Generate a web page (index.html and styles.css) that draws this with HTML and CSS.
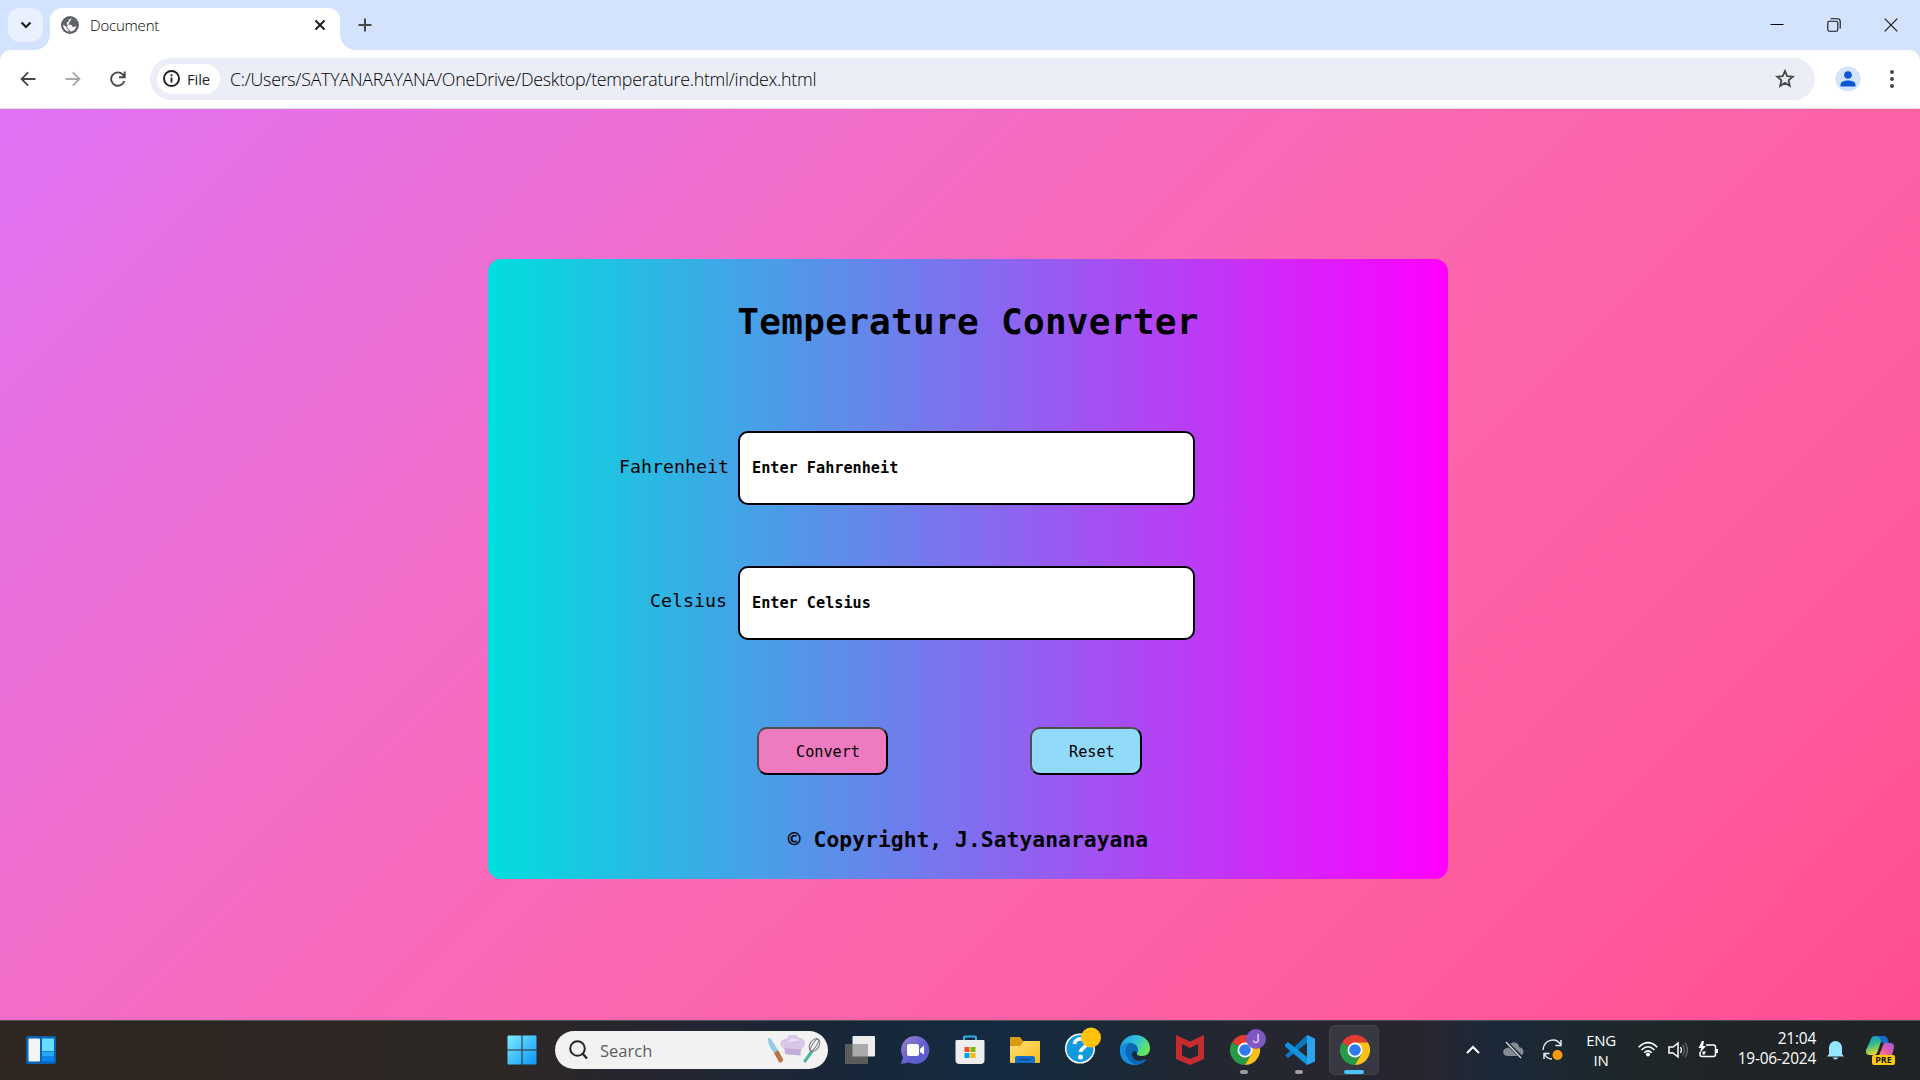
FILE: index.html
```html
<!DOCTYPE html>
<html lang="en">
<head>
<meta charset="utf-8">
<title>Document</title>
<link rel="stylesheet" href="styles.css">
</head>
<body>
<header class="tabstrip">
  <div class="tab-search"><svg width="12" height="8" viewBox="0 0 12 8"><path d="M1.5 1.5 6 6l4.500-4.500" fill="none" stroke="#1f1f1f" stroke-width="2.200"/></svg></div>
  <div class="tab">
    <svg class="globe" width="18" height="18" viewBox="0 0 18 18"><circle cx="9" cy="9" r="9" fill="#5f6368"/><path d="M10.800 2.200 7.500 4l.3 1.800-2 .8v2.200h4q1.700.2 1.700 2.300h1.500q1-1.300 2.300-.8a7 7 0 0 1-5.800 5.400q-.3-2.200-1.800-2.300-.8-2.200-2.700-2.600L2.200 8.400a7 7 0 0 0 5.300 7.400v-2.300q-2 0-2-2" fill="#fff"/></svg>
    <span class="tab-title">Document</span>
    <svg width="12" height="12" viewBox="0 0 12 12"><path d="m1.500 1.500 9 9m0-9-9 9" stroke="#1f1f1f" stroke-width="2"/></svg>
  </div>
  <svg class="new-tab" width="14" height="14" viewBox="0 0 14 14"><path d="M7 .5v13M.5 7h13" stroke="#474747" stroke-width="2"/></svg>
  <div class="window-controls">
    <svg width="14" height="14" viewBox="0 0 14 14"><path d="M.5 6.500h13" stroke="#000" stroke-width="1"/></svg>
    <svg width="14" height="14" viewBox="0 0 14 14"><rect x=".8" y="3.200" width="10" height="10" rx="1.500" fill="none" stroke="#111" stroke-width="1.100"/><path d="M3.500.8h7a2.700 2.700 0 0 1 2.700 2.700v7" fill="none" stroke="#111" stroke-width="1.100"/></svg>
    <svg width="14" height="14" viewBox="0 0 14 14"><path d="m.7.7 12.600 12.600m0-12.600L.7 13.300" stroke="#111" stroke-width="1.100"/></svg>
  </div>
</header>
<nav class="toolbar">
  <svg class="nav" width="16" height="16" viewBox="0 0 16 16"><path d="M15.500 8H2M8.200 1.300 1.500 8l6.700 6.700" fill="none" stroke="#474747" stroke-width="1.800"/></svg>
  <svg class="nav" width="16" height="16" viewBox="0 0 16 16"><path d="M.5 8H14M7.800 1.300 14.500 8l-6.700 6.700" fill="none" stroke="#a9a9a9" stroke-width="1.800"/></svg>
  <svg class="nav" width="16" height="16" viewBox="0 0 16 16"><path d="M14.300 10a6.700 6.700 0 1 1-1.600-6.600L14.500 5.500M14.700.5v5.700H9" fill="none" stroke="#474747" stroke-width="1.900"/></svg>
  <div class="omnibox">
    <div class="chip">
      <svg width="17" height="17" viewBox="0 0 17 17"><circle cx="8.500" cy="8.500" r="7.500" fill="none" stroke="#1f1f1f" stroke-width="1.900"/><path d="M8.500 7.500v5M8.500 4.300v1.900" stroke="#1f1f1f" stroke-width="1.800"/></svg>
      <span>File</span>
    </div>
    <span class="url">C:/Users/SATYANARAYANA/OneDrive/Desktop/temperature.html/index.html</span>
    <svg width="20" height="19" viewBox="0 0 20 19"><path d="m10 2 2.200 5.100 5.600.5-4.200 3.700 1.200 5.500L10 13.900l-4.800 2.900 1.200-5.500L2.200 7.600l5.600-.5z" fill="none" stroke="#474747" stroke-width="1.800"/></svg>
  </div>
  <svg class="avatar" width="26" height="26" viewBox="0 0 26 26"><circle cx="13" cy="13" r="12.500" fill="#d3e3fd"/><circle cx="13" cy="9" r="3.800" fill="#0b57d0"/><path d="M5.500 20.500v-2c0-5.500 15-5.500 15 0v2z" fill="#0b57d0"/></svg>
  <svg class="menu" width="4" height="18" viewBox="0 0 4 18"><g fill="#474747"><circle cx="2" cy="2" r="2"/><circle cx="2" cy="9" r="2"/><circle cx="2" cy="16" r="2"/></g></svg>
</nav>
<main class="page">
  <form class="converter">
    <h1>Temperature Converter</h1>
    <div class="field"><label for="fahrenheit">Fahrenheit</label><input id="fahrenheit" placeholder="Enter Fahrenheit"></div>
    <div class="field celsius"><label for="celsius">Celsius</label><input id="celsius" placeholder="Enter Celsius"></div>
    <div class="actions"><button class="convert" type="button">Convert</button><button class="reset" type="button">Reset</button></div>
    <h3>© Copyright, J.Satyanarayana</h3>
  </form>
</main>
<footer class="taskbar">
  <svg width="30" height="28" viewBox="0 0 30 28"><rect width="30" height="28" rx="2" fill="#0b62b5"/><rect x="2.500" y="2.500" width="11.500" height="23" rx="1" fill="#f3f3f5"/><path d="M16 2.500h12v12.500H16z" fill="#69dcff"/><path d="M16 15.500h12v5H16z" fill="#29a9fb"/><path d="M16 21h12v4.500H16z" fill="#0a84f0"/></svg>
  <div class="apps">
    <div class="app start"><svg width="30" height="30" viewBox="0 0 30 30"><defs><linearGradient id="win" x1="0" y1="0" x2="30" y2="30" gradientUnits="userSpaceOnUse"><stop stop-color="#7cf0ff"/><stop offset="1" stop-color="#0793fb"/></linearGradient></defs><path d="M.5 1.500q0-1 1-1h13v14H.5zM15.500.5h13q1 0 1 1v13h-14zM.5 15.500h14v14h-13q-1 0-1-1zM15.500 15.500h14v13q0 1-1 1h-13z" fill="url(#win)"/></svg></div>
    <div class="search">
      <svg width="19" height="20" viewBox="0 0 19 20"><circle cx="8.500" cy="8.500" r="7.300" fill="none" stroke="#252525" stroke-width="2"/><path d="m13.500 13.500 4.500 5" stroke="#252525" stroke-width="2.400"/></svg>
      <span>Search</span>
      <svg width="55" height="30" viewBox="0 0 55 30"><path d="M2 4c0-1.500 2-1.200 3 0l7 11-3.500 3C4 14 2 8 2 4z" fill="#91cce3"/><path d="m8 18 4-3 5 9c.5 3-2.500 4.500-4 3z" fill="#ba7441"/><path d="M18.500 14c-7-3-4-11 2-10 2-6 10-6 12-1 7-1 9 8 3 11l-1 6-15-1z" fill="#d9c7e9"/><path d="m18.500 13 16.500 1.500-1 6-15-1.500z" fill="#c4acd9"/><path d="M21 8c3-5 7-6 12-2-5 0-8 0-12 2z" fill="#eee2f6"/><path d="m45.500 17-6.500 9" stroke="#48b6a0" stroke-width="3" stroke-linecap="round"/><g fill="none" stroke="#77797d"><ellipse cx="48.500" cy="10" rx="4.500" ry="7" transform="rotate(32 48.500 10)"/><ellipse cx="48.500" cy="10" rx="2" ry="7" transform="rotate(32 48.500 10)"/></g></svg>
    </div>
    <div class="app first"><svg width="30" height="28" viewBox="0 0 30 28"><rect x="7.500" width="22.500" height="20.500" rx="1" fill="#ededed"/><rect y="8" width="23" height="20" rx="1" fill="#5b5c5e"/><path d="M7.500 8H23v12.500H7.500z" fill="#aaa"/></svg></div>
    <div class="app"><svg width="30" height="30" viewBox="0 0 30 30"><defs><linearGradient id="chat" x2="1" y2="1"><stop stop-color="#a080c4"/><stop offset=".55" stop-color="#6360cf"/><stop offset="1" stop-color="#5458cf"/></linearGradient></defs><path d="M15.500 1a14 14 0 1 1-6.500 26.500L1 29l2-7A14 14 0 0 1 15.500 1z" fill="url(#chat)"/><rect x="7" y="9" width="12" height="12" rx="2" fill="#fff"/><path d="m20 14 4-3.500v9L20 17z" fill="#fff"/></svg></div>
    <div class="app"><svg width="30" height="30" viewBox="0 0 30 30"><path d="M9 7V2.500q0-1 1-1h10q1 0 1 1V7" fill="none" stroke="#30b1ea" stroke-width="2"/><path d="M.5 6q0-1 1-1h27q1 0 1 1v19a4 4 0 0 1-4 4h-21a4 4 0 0 1-4-4z" fill="#eeeeef"/><path d="M9.500 12h5v5h-5z" fill="#f25022"/><path d="M15.500 12h5v5h-5z" fill="#7fba00"/><path d="M9.500 18h5v5h-5z" fill="#00a4ef"/><path d="M15.500 18h5v5h-5z" fill="#ffb900"/></svg></div>
    <div class="app"><svg width="30" height="28" viewBox="0 0 30 28"><defs><linearGradient id="folder" x2="1" y2="1"><stop stop-color="#ffdf78"/><stop offset="1" stop-color="#fabc18"/></linearGradient></defs><path d="M0 2q0-1 1-1h9l3 4h16q1 0 1 1v8H0z" fill="#d99b12"/><path d="M0 10h10l4-5h15q1 0 1 1v20q0 1-1 1H1q-1 0-1-1z" fill="url(#folder)"/><path d="M5 27v-5q0-2 2-2h16q2 0 2 2v5z" fill="#1172ce"/><path d="M9 23.500h12" stroke="#124a87" stroke-width="1.500"/></svg></div>
    <div class="app help"><svg width="36" height="38" viewBox="0 0 36 38"><circle cx="15" cy="21.500" r="14.300" fill="#0f9adb" stroke="#fff" stroke-width="1.500"/><path d="M9.500 17c.5-7 12-6.500 11.500.3-.3 4-5.500 4-5.500 7.700" fill="none" stroke="#fff" stroke-width="3.700"/><circle cx="15.500" cy="30" r="2.500" fill="#fff"/><circle cx="26" cy="10.500" r="10" fill="#ffc20e"/></svg></div>
    <div class="app"><svg width="30" height="30" viewBox="0 0 30 30"><defs><linearGradient id="edge-a" x2="1" y2=".5"><stop stop-color="#199be5"/><stop offset=".55" stop-color="#2dc4d9"/><stop offset="1" stop-color="#67e65a"/></linearGradient></defs><path d="M0 14C1 5 8 0 15 0c9 0 15 6 15 13 0 5-3 8-8 8-4 0-6-1.500-5-3 2-3 0-7-5-7-6 0-10 2-12 6z" fill="url(#edge-a)"/><path d="M0 16c1-6 6-9 11-8 7 1 8 6 6 10-1-3-5-2-5 1 0 5 5 8 11 6l4-1c-3 4-7 6-12 6C7 30 0 24 0 16z" fill="#0c67b8"/><path d="M0 16c0-5 4-9 10-8-5 3-6 9-3 14s7 8 12 7c-10 3-19-3-19-13z" fill="#188edb"/></svg></div>
    <div class="app"><svg width="28" height="30" viewBox="0 0 28 30"><path d="m0 0 14 6.500L28 0v24l-14 6-14-6zm6 9v11.500l8 3.500 8-3.500V9l-8 4z" fill="#c52b31" fill-rule="evenodd"/></svg></div>
    <div class="app running profile">
      <svg width="30" height="30" viewBox="0 0 30 30"><g id="chrome"><path d="M15 15 2 7.500A15 15 0 0 1 28 7.500H15z" fill="#e33b2e"/><path d="M2 7.500A15 15 0 0 0 15 30l6.500-11.300L15 15z" fill="#269a48"/><path d="M28 7.500A15 15 0 0 1 15 30l6.500-11.300L15 7.500z" fill="#fbc116"/><circle cx="15" cy="15" r="7.500" fill="#fff"/><circle cx="15" cy="15" r="5.800" fill="#2f7bed"/></g></svg>
      <span class="badge">J</span>
    </div>
    <div class="app running"><svg width="30" height="30" viewBox="0 0 30 30"><path d="m22 0 8 3.500v23L22 30z" fill="#27a5ef"/><path d="M0 20.500 22 0v8L3 23z" fill="#0b79bf"/><path d="M0 9.500 3 7l19 15v8L0 11.500z" fill="#1592dc"/></svg></div>
    <div class="app active"><svg width="30" height="30" viewBox="0 0 30 30"><use href="#chrome"/></svg></div>
  </div>
  <div class="tray">
    <div class="tray-cell"><svg width="14" height="9" viewBox="0 0 14 9"><path d="m1 8 6-6 6 6" fill="none" stroke="#fff" stroke-width="2"/></svg></div>
    <div class="tray-cell"><svg width="21" height="18" viewBox="0 0 21 18"><path d="M5 15c-7 0-6-8 0-8C7-1 16 1 16 6c6 1 6 9 0 9z" fill="#858b93"/><path d="m3 1 15 15" stroke="#1d2838" stroke-width="3.500"/><path d="m3 1 15 16" stroke="#ddd" stroke-width="1.200"/></svg></div>
    <div class="tray-cell"><svg width="22" height="22" viewBox="0 0 22 22"><g fill="none" stroke="#eee" stroke-width="1.400"><path d="M1 11C2 0 14-2 19 6M19 1v5.500h-5.500M10 20c-3 0-6-2-7.500-5M2 20v-5.500h5.500"/></g><circle cx="15.500" cy="16" r="5" fill="#ff9b0b"/></svg></div>
    <div class="language"><span>ENG</span><span>IN</span></div>
    <div class="status">
      <svg width="20" height="16" viewBox="0 0 20 16"><g fill="none" stroke="#fff" stroke-width="1.500"><path d="M.7 6.300q9.300-9.300 18.600 0M3.500 9q6.500-6.500 13 0M6.300 11.700q3.700-3.700 7.400 0"/></g><circle cx="10" cy="13.500" r="2" fill="#fff"/></svg>
      <svg width="20" height="18" viewBox="0 0 20 18"><path d="M1 6h4l5-4v14l-5-4H1z" fill="none" stroke="#fff" stroke-width="1.500"/><path d="M12.500 6q2 3 0 6" fill="none" stroke="#fff" stroke-width="1.300"/><path d="M14.500 3.500q4 5.500 0 11M17 1.500q5 7.500 0 15" fill="none" stroke="#666" stroke-width="1.300"/></svg>
      <svg width="20" height="18" viewBox="0 0 20 18"><path d="M8 4h7.500q2 0 2 2v7.500q0 2-2 2H4q-2 0-2-2V11" fill="none" stroke="#fff" stroke-width="1.500"/><path d="M18 8h2v4h-2zM4 0 .5 7H3l-1 5 6-7H5l1-5zM4.500 10.500H8L6.500 13.500h-2z" fill="#fff"/></svg>
    </div>
    <div class="clock"><span>21:04</span><span>19-06-2024</span></div>
    <svg class="bell" width="17" height="20" viewBox="0 0 17 20"><path d="M2 14V7.500a6.500 6.500 0 0 1 13 0V14l2 2.500H0zM5.500 17.500h6q-3 4-6 0z" fill="#94e7ff"/></svg>
    <div class="copilot">
      <svg width="28" height="22" viewBox="0 0 28 22"><defs><linearGradient id="co-a" x1="0" y1="0" x2=".3" y2="1"><stop stop-color="#1589e5"/><stop offset=".5" stop-color="#2dbd8a"/><stop offset="1" stop-color="#e8d42e"/></linearGradient><linearGradient id="co-b" x1="1" y1="0" x2="0" y2="1"><stop stop-color="#9d55ea"/><stop offset=".6" stop-color="#ed6297"/><stop offset="1" stop-color="#ffad51"/></linearGradient></defs><path d="M5 3q1-3 4-3h8L11 17q-1 2-3 2H3q-4-1-3-5z" fill="url(#co-a)"/><path d="M9 0h9q3 0 4 4l1 3h-5q-3 0-4-4-1-3-5-3z" fill="#176dcd"/><path d="M18 7h7q4 1 3 5l-2 7q-1 3-4 3H12z" fill="url(#co-b)"/></svg>
      <span class="pre">PRE</span>
    </div>
  </div>
</footer>
</body>
</html>
```
FILE: styles.css
```css
* { box-sizing: border-box; }
body {
  margin: 0;
  width: 1920px;
  height: 1080px;
  overflow: hidden;
  display: flex;
  flex-direction: column;
  font-family: "Open Sans", "Noto Sans", sans-serif;
  color: #1f1f1f;
}
svg { display: block; flex: none; }

/* Browser tab strip */
.tabstrip {
  height: 50px;
  flex: none;
  display: flex;
  align-items: flex-start;
  padding: 8px 22px 0 8px;
  background: #d3e3fd;
}
.tab-search {
  width: 35px;
  height: 34px;
  border-radius: 12px;
  background: #e9f0fe;
  display: grid;
  place-items: center;
}
.tab {
  position: relative;
  width: 290px;
  height: 42px;
  margin-left: 7px;
  padding: 0 14px 8px 11px;
  border-radius: 12px 12px 0 0;
  background: #fff;
  display: flex;
  align-items: center;
}
.tab::before,
.tab::after {
  content: "";
  position: absolute;
  bottom: 0;
  width: 15px;
  height: 15px;
}
.tab::before { left: -15px; background: radial-gradient(circle at 0 0, transparent 14.500px, #fff 15px); }
.tab::after { right: -15px; background: radial-gradient(circle at 100% 0, transparent 14.500px, #fff 15px); }
.tab-title { flex: 1; margin-left: 11px; font-size: 15px; font-weight: 300; letter-spacing: -0.2px; color: #000; }
.new-tab { margin: 10px 0 0 18px; }
.window-controls { margin: 10px 0 0 auto; display: flex; gap: 43px; }

/* Browser toolbar */
.toolbar {
  position: relative;
  height: 59px;
  flex: none;
  display: flex;
  align-items: center;
  padding: 0 26px 1px 20px;
  background: #fff;
  border-bottom: 1px solid #dcdfdc;
}
.toolbar::before,
.toolbar::after {
  content: "";
  position: absolute;
  top: 0;
  width: 10px;
  height: 10px;
}
.toolbar::before { left: 0; background: radial-gradient(circle at 100% 100%, #fff 9.500px, #d3e3fd 10px); }
.toolbar::after { right: 0; background: radial-gradient(circle at 0 100%, #fff 9.500px, #d3e3fd 10px); }
.nav { margin-right: 29px; }
.omnibox {
  width: 1665px;
  height: 42px;
  margin-left: -5px;
  padding: 0 20px 0 7px;
  border-radius: 21px;
  background: #ebeef7;
  display: flex;
  align-items: center;
}
.chip {
  width: 63px;
  height: 30px;
  padding-left: 6px;
  border-radius: 15px;
  background: #fff;
  display: flex;
  align-items: center;
  gap: 7px;
  font-size: 15px;
  letter-spacing: -0.2px;
}
.url { flex: 1; margin-left: 10px; padding-top: 1px; font-size: 17.800px; font-weight: 300; letter-spacing: -0.25px; color: #000; }
.avatar { margin-left: 20px; }
.menu { margin-left: auto; }

/* Converter page */
.page {
  height: 911px;
  flex: none;
  padding: 150px 0 0 488px;
  background: linear-gradient(135deg, #e074f6 0%, #e96fdb 17%, #f36dc6 34%, #fa68b2 50%, #fd64a9 62%, #fe5b9f 80%, #ff4e92 100%);
}
.converter {
  width: 960px;
  height: 620px;
  padding-top: 40px;
  border-radius: 13px;
  background: linear-gradient(to right, #00dede, #f0f);
  display: flex;
  flex-direction: column;
  font-family: "DejaVu Sans Mono", "Liberation Mono", monospace;
  color: #000;
}
h1 {
  height: 46px;
  margin: 0;
  line-height: 46px;
  text-align: center;
  font-size: 36px;
  letter-spacing: 0.300px;
}
.field { height: 74px; margin-top: 86px; display: flex; align-items: center; }
.field.celsius { margin-top: 61px; }
.field label {
  width: 241px;
  margin: 0 9px 4px 0;
  text-align: right;
  font-size: 18.200px;
  letter-spacing: 0.04px;
}
.field.celsius label { margin: 0 11px 6px 0; width: 239px; }
.field input {
  width: 457px;
  height: 74px;
  padding: 0 13px 0 12px;
  border: 2px solid #000;
  border-radius: 10px;
  background: #fff;
  font: bold 15.200px "DejaVu Sans Mono", monospace;
}
.field input::placeholder { color: #000; opacity: 1; }
.actions { height: 48px; margin: 87px 0 0 269px; display: flex; gap: 142px; }
.actions button {
  height: 48px;
  padding: 2px 0 0 37px;
  border: 2px solid #000;
  border-top-color: #4e4e4e;
  border-left-color: #4e4e4e;
  border-radius: 10px;
  text-align: left;
  font: 15.200px "DejaVu Sans Mono", monospace;
  color: #000;
}
.actions .convert { width: 131px; background: #ee7bbf; }
.actions .reset { width: 112px; background: #92dafa; }
h3 {
  margin: 51px 0 0;
  line-height: 28px;
  text-align: center;
  font-size: 21.300px;
  letter-spacing: 0.05px;
}

/* Taskbar */
.taskbar {
  height: 60px;
  flex: none;
  display: flex;
  align-items: center;
  padding: 0 20px 2px 26px;
  border-top: 1px solid #505052;
  background: linear-gradient(to right, #2e2722 0, #2d2724 500px, #26252f 640px, #172739 850px, #152a40 1000px, #1b2936 1130px, #242630 1230px, #272630 1430px, #1b283a 1500px, #1c282c 1600px, #202426 1700px, #202426 100%);
  color: #fff;
}
.apps { display: flex; align-items: center; margin-left: 438px; }
.app { position: relative; width: 55px; height: 59px; display: grid; place-items: center; }
.app.start { width: 61px; padding-right: 5px; }
.app.first { margin-left: 4px; }
.app.help svg { margin: -8px 0 0 6px; }
.search {
  width: 273px;
  height: 38px;
  margin-top: 1px;
  padding: 0 7px 0 14px;
  border-radius: 19px;
  background: #f2f2f3;
  display: flex;
  align-items: center;
  color: #5d5d5d;
  font-size: 16.500px;
}
.search span { flex: 1; margin-left: 12px; }
.running::after,
.active::after {
  content: "";
  position: absolute;
  bottom: 5px;
  left: 23px;
  width: 8px;
  height: 4px;
  border-radius: 2px;
  background: #9a9a9e;
}
.active::before {
  content: "";
  position: absolute;
  inset: 5px 3px 4px 2px;
  border: 1px solid #42424b;
  border-radius: 6px;
  background: #373842;
}
.active svg { position: relative; }
.active::after { left: 17px; width: 20px; background: #4cc2ff; }
.badge {
  position: absolute;
  left: 29px;
  top: 9px;
  width: 20px;
  height: 20px;
  border-radius: 50%;
  background: #7e57c2;
  color: #e8def5;
  text-align: center;
  font: 13px/20px Roboto, sans-serif;
}
.tray { margin-left: auto; display: flex; align-items: center; }
.tray-cell { width: 40px; display: grid; place-items: center; }
.language,
.clock { display: flex; flex-direction: column; font-size: 15px; line-height: 20px; letter-spacing: -0.3px; }
.language { width: 56px; align-items: center; }
.status { display: flex; gap: 10px; margin-left: 9px; }
.clock { width: 98px; align-items: flex-end; margin-top: -2px; font-size: 15.400px; letter-spacing: -0.2px; }
.bell { margin-left: 11px; }
.copilot { position: relative; width: 28px; height: 28px; margin-left: 22px; margin-right: 6px; }
.pre {
  position: absolute;
  left: 6px;
  bottom: -1px;
  width: 23px;
  height: 10px;
  border-radius: 2px;
  background: #fcc90b;
  color: #171717;
  text-align: center;
  font-size: 9px;
  font-weight: 700;
  line-height: 10px;
}
```
